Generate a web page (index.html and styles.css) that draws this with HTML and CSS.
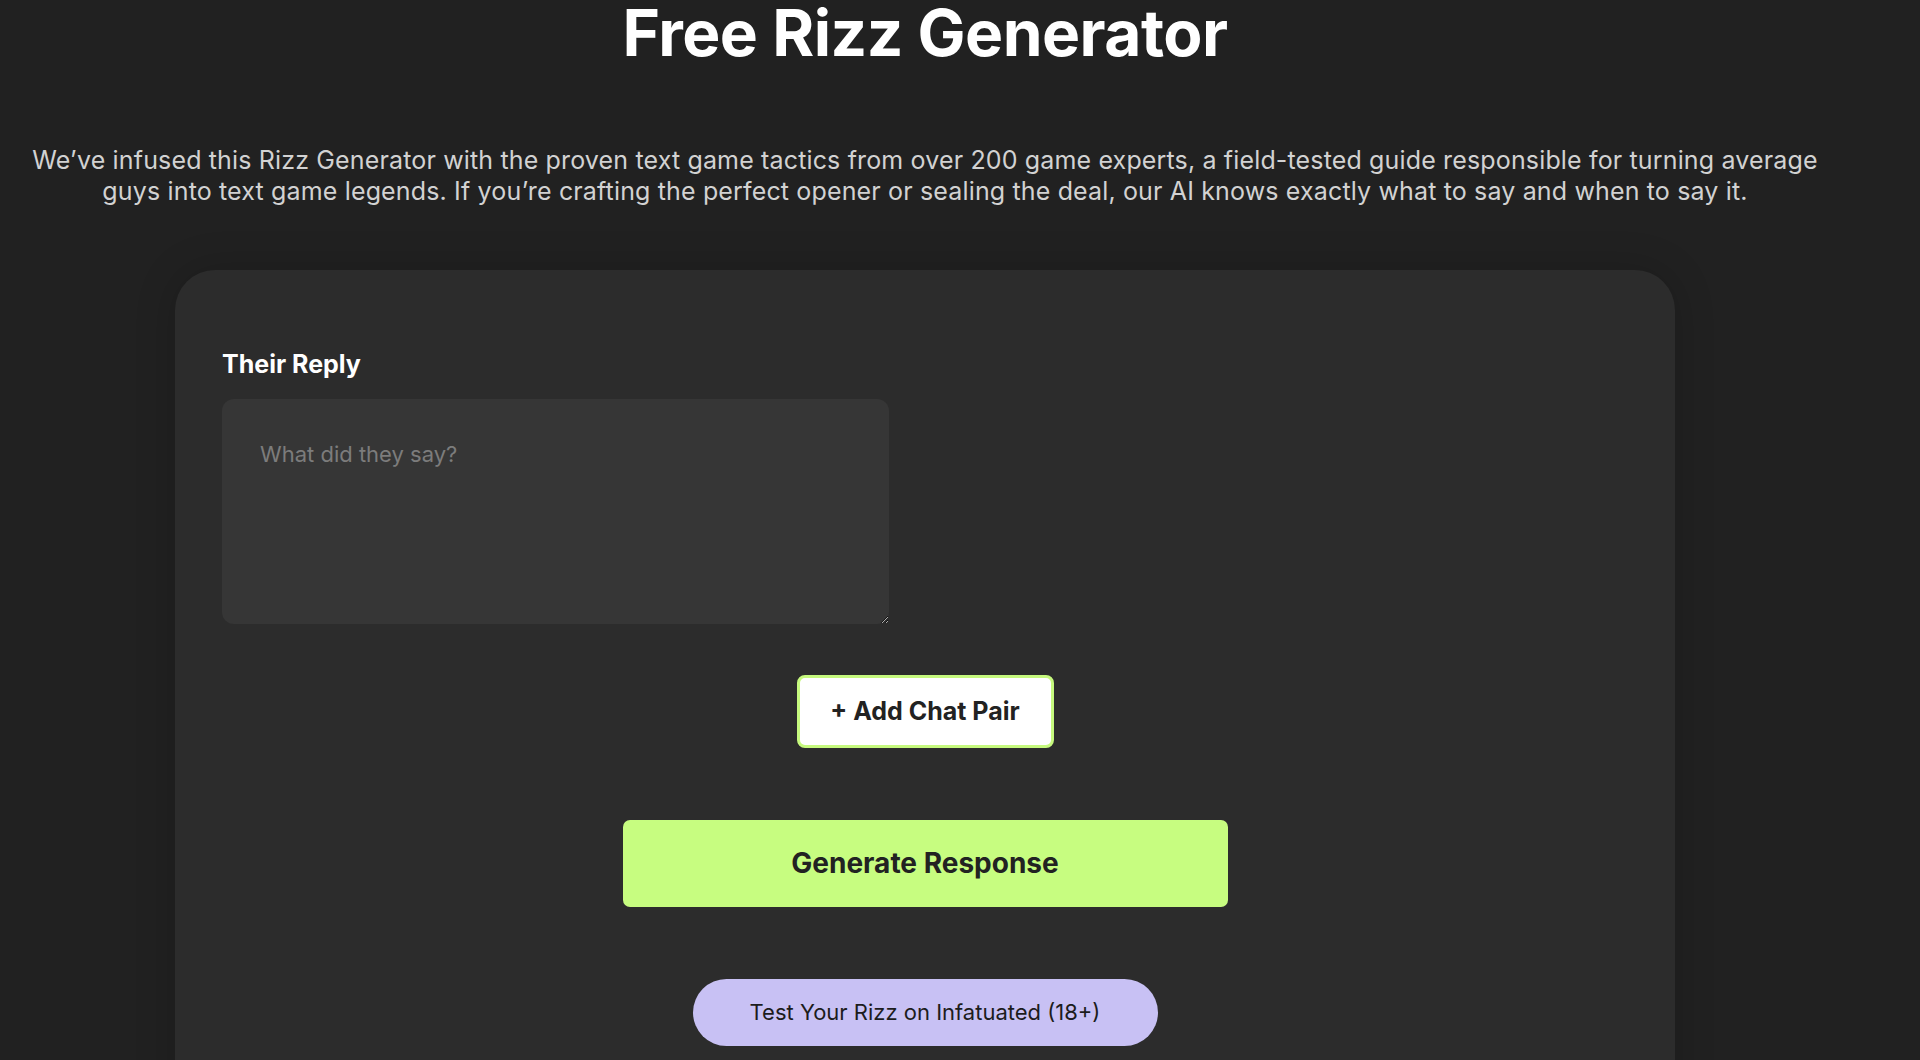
FILE: index.html
```html
<!DOCTYPE html>
<html lang="en">
<head>
<meta charset="utf-8">
<title>Free Rizz Generator</title>
<link rel="stylesheet" href="styles.css">
</head>
<body>
<main class="page">
  <h1 class="title">Free Rizz Generator</h1>
  <p class="intro">We’ve infused this Rizz Generator with the proven text game tactics from over 200 game experts, a field-tested guide responsible for turning average guys into text game legends. If you’re crafting the perfect opener or sealing the deal, our AI knows exactly what to say and when to say it.</p>
  <section class="card">
    <div class="pair">
      <div class="field">
        <label class="label" for="reply">Their Reply</label>
        <textarea id="reply" class="input" placeholder="What did they say?"></textarea>
      </div>
      <div class="field"></div>
    </div>
    <div class="actions">
      <button class="btn-add">+ Add Chat Pair</button>
      <button class="btn-generate">Generate Response</button>
      <button class="btn-test">Test Your Rizz on Infatuated (18+)</button>
    </div>
  </section>
</main>
</body>
</html>
```

FILE: styles.css
```css
* { box-sizing: border-box; }
html, body {
  margin: 0;
  background: #212121;
  overflow: hidden;
}
body {
  font-family: Inter, "Noto Sans", sans-serif;
  color: #ffffff;
}
.page {
  width: 1850px;
  text-align: center;
}
.title {
  margin: -5px 0 0;
  font-size: 64px;
  line-height: 1.2;
  font-weight: 700;
  letter-spacing: -0.5px;
  color: #ffffff;
}
.intro {
  margin: 73px auto 0;
  width: 1820px;
  font-size: 25px;
  line-height: 31px;
  letter-spacing: 0.15px;
  color: #d2d2d2;
}
.card {
  width: 1500px;
  margin: 63px auto 0;
  background: #2c2c2c;
  border-radius: 40px;
  padding: 79px 47px 80px;
  box-shadow: 0 0 40px rgba(0, 0, 0, 0.18);
  text-align: left;
}
.pair {
  display: grid;
  grid-template-columns: 1fr 1fr;
  column-gap: 72px;
}
.field {
  display: flex;
  flex-direction: column;
}
.label {
  font-size: 25px;
  line-height: 30px;
  font-weight: 700;
  color: #ffffff;
  margin-bottom: 20px;
}
.input {
  height: 225px;
  background: #363636;
  border: none;
  border-radius: 12px;
  padding: 42px 38px;
  font-family: Inter, "Noto Sans", sans-serif;
  font-size: 22px;
  color: #ffffff;
  outline: none;
}
.input::placeholder { color: #7c7c7c; }
.actions {
  display: flex;
  flex-direction: column;
  align-items: center;
  margin-top: 51px;
}
.btn-add {
  width: 257px;
  height: 73px;
  background: #ffffff;
  border: 3px solid #c6f97e;
  border-radius: 8px;
  font-family: Inter, "Noto Sans", sans-serif;
  font-size: 25px;
  font-weight: 700;
  color: #222222;
}
.btn-generate {
  margin-top: 72px;
  width: 605px;
  height: 87px;
  background: #c7fd80;
  border: none;
  border-radius: 7px;
  font-family: Inter, "Noto Sans", sans-serif;
  font-size: 28px;
  font-weight: 700;
  color: #222222;
}
.btn-test {
  margin-top: 72px;
  width: 465px;
  height: 67px;
  background: #c8c1f4;
  border: none;
  border-radius: 34px;
  font-family: Inter, "Noto Sans", sans-serif;
  font-size: 22px;
  font-weight: 400;
  color: #1c1c1c;
}
```
